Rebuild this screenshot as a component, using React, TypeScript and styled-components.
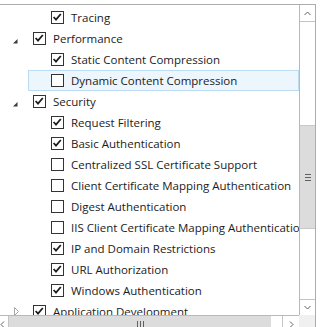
import React, { FC } from 'react';
import styled, { createGlobalStyle } from 'styled-components';

const GlobalStyle = createGlobalStyle`
  html, body {
    margin: 0;
    padding: 0;
    background: #ffffff;
    overflow: hidden;
  }
`;

const Frame = styled.div`
  box-sizing: border-box;
  margin: 4px 0 0 -9px;
  width: 325px;
  height: 328px;
  border-top: 1px solid #acacac;
  border-right: 1px solid #acacac;
  display: grid;
  grid-template-columns: 1fr 16px;
  grid-template-rows: 310px 17px;
`;

const List = styled.div`
  overflow: hidden;
  padding-top: 2px;
  font-family: 'Open Sans', 'Noto Sans', sans-serif;
  font-size: 11.5px;
  color: #1b1b1b;
`;

const Row = styled.div<{ $level: number; $selected?: boolean }>`
  box-sizing: border-box;
  height: 21px;
  margin-left: ${(p) => 1 + p.$level * 18}px;
  display: flex;
  align-items: center;
  white-space: nowrap;
  border: 1px solid ${(p) => (p.$selected ? '#bcdcf4' : 'transparent')};
  background: ${(p) => (p.$selected ? '#edf5fd' : 'transparent')};
`;

const Expander = styled.svg`
  flex: none;
  width: 17px;
  height: 19px;
`;

const Box = styled.span`
  box-sizing: border-box;
  flex: none;
  width: 13px;
  height: 13px;
  margin-left: 5px;
  border: 1px solid #333333;
  background: #ffffff;
  display: flex;
`;

const Label = styled.span`
  margin-left: 7px;
  line-height: 19px;
`;

const VScroll = styled.div`
  border-left: 1px solid #b9b9b9;
  display: flex;
  flex-direction: column;
`;

const Button = styled.div<{ $edge: 'top' | 'bottom' | 'left' | 'right'; $size: number }>`
  box-sizing: border-box;
  flex: none;
  display: flex;
  align-items: center;
  justify-content: center;
  ${(p) => (p.$edge === 'top' || p.$edge === 'bottom' ? `height: ${p.$size}px;` : `width: ${p.$size}px;`)}
  border-${(p) => p.$edge}: 1px solid #c4c4c4;
`;

const Track = styled.div`
  flex: 1;
  padding-top: 103px;
`;

const VThumb = styled.div`
  box-sizing: border-box;
  height: 104px;
  background: #dcdcdc;
  border-top: 1px solid #c9c9c9;
  border-bottom: 1px solid #c9c9c9;
  display: flex;
  align-items: center;
  justify-content: center;
`;

const HScroll = styled.div`
  border-top: 1px solid #b9b9b9;
  display: flex;
`;

const LeftButton = styled(Button)`
  justify-content: flex-start;
  padding-left: 9px;
`;

const HThumb = styled.div`
  flex: none;
  width: 262px;
  background: #dcdcdc;
  display: flex;
  align-items: center;
  justify-content: center;
`;

const Gap = styled.div`
  flex: 1;
`;

const Corner = styled.div`
  background: #f0f0f0;
`;

type Item = {
  label: string;
  level: number;
  checked: boolean;
  expanded?: boolean;
  selected?: boolean;
};

const items: Item[] = [
  { label: 'Tracing', level: 2, checked: true },
  { label: 'Performance', level: 1, checked: true, expanded: true },
  { label: 'Static Content Compression', level: 2, checked: true },
  { label: 'Dynamic Content Compression', level: 2, checked: false, selected: true },
  { label: 'Security', level: 1, checked: true, expanded: true },
  { label: 'Request Filtering', level: 2, checked: true },
  { label: 'Basic Authentication', level: 2, checked: true },
  { label: 'Centralized SSL Certificate Support', level: 2, checked: false },
  { label: 'Client Certificate Mapping Authentication', level: 2, checked: false },
  { label: 'Digest Authentication', level: 2, checked: false },
  { label: 'IIS Client Certificate Mapping Authentication', level: 2, checked: false },
  { label: 'IP and Domain Restrictions', level: 2, checked: true },
  { label: 'URL Authorization', level: 2, checked: true },
  { label: 'Windows Authentication', level: 2, checked: true },
  { label: 'Application Development', level: 1, checked: true, expanded: false },
];

const Check: FC<{ checked: boolean }> = ({ checked }) => (
  <Box>
    {checked && (
      <svg width="11" height="11" viewBox="0 0 11 11">
        <path d="M1.6 5 L4 7.6 L8.8 2" fill="none" stroke="#1e1e1e" strokeWidth="1.8" />
      </svg>
    )}
  </Box>
);

const Toggle: FC<{ expanded?: boolean }> = ({ expanded }) => (
  <Expander viewBox="0 0 17 19">
    {expanded === true && <path d="M6.5 10 L6.5 14.5 L2 14.5 Z" fill="#3a3a3a" />}
    {expanded === false && (
      <path d="M3.5 5.5 L7.5 9.5 L3.5 13.5 Z" fill="none" stroke="#a8a8a8" strokeWidth="1" />
    )}
  </Expander>
);

const Chevron: FC<{ dir: 'up' | 'down' | 'left' | 'right' }> = ({ dir }) => {
  const d = {
    up: 'M0.5 4 L3.5 1 L6.5 4',
    down: 'M0.5 1 L3.5 4 L6.5 1',
    left: 'M4 0.5 L1 3.5 L4 6.5',
    right: 'M1 0.5 L4 3.5 L1 6.5',
  }[dir];
  const flat = dir === 'up' || dir === 'down';
  return (
    <svg width={flat ? 7 : 5} height={flat ? 5 : 7} viewBox={flat ? '0 0 7 5' : '0 0 5 7'}>
      <path d={d} fill="none" stroke="#606060" strokeWidth="1" />
    </svg>
  );
};

const Grip: FC<{ vertical?: boolean }> = ({ vertical }) => (
  <svg width={vertical ? 6 : 7} height={vertical ? 7 : 6} viewBox={vertical ? '0 0 6 7' : '0 0 7 6'}>
    {[0.5, 3.5, 6.5].map((v) =>
      vertical ? (
        <line key={v} x1="0" x2="6" y1={v} y2={v} stroke="#606060" />
      ) : (
        <line key={v} y1="0" y2="6" x1={v} x2={v} stroke="#606060" />
      ),
    )}
  </svg>
);

const App: FC = () => {
  return (
    <>
      <GlobalStyle />
      <Frame>
        <List>
          {items.map((it) => (
            <Row key={it.label} $level={it.level} $selected={it.selected}>
              <Toggle expanded={it.expanded} />
              <Check checked={it.checked} />
              <Label>{it.label}</Label>
            </Row>
          ))}
        </List>
        <VScroll>
          <Button $edge="bottom" $size={17}>
            <Chevron dir="up" />
          </Button>
          <Track>
            <VThumb>
              <Grip vertical />
            </VThumb>
          </Track>
          <Button $edge="top" $size={16}>
            <Chevron dir="down" />
          </Button>
        </VScroll>
        <HScroll>
          <LeftButton $edge="right" $size={18}>
            <Chevron dir="left" />
          </LeftButton>
          <HThumb>
            <Grip />
          </HThumb>
          <Gap />
          <Button $edge="left" $size={17}>
            <Chevron dir="right" />
          </Button>
        </HScroll>
        <Corner />
      </Frame>
    </>
  );
};

export default App;
